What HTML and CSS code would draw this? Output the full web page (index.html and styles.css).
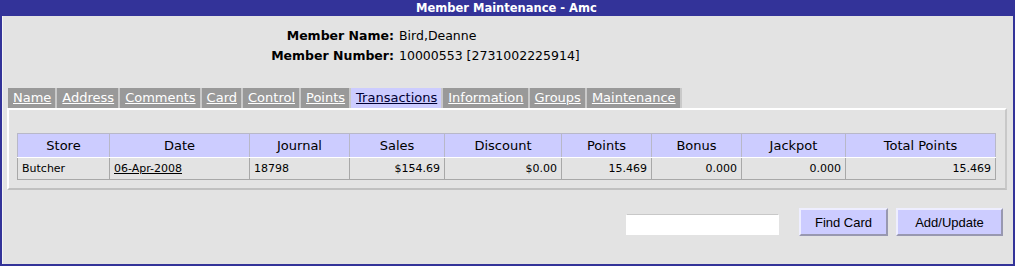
FILE: index.html
```html
<!DOCTYPE html>
<html>
<head>
<meta charset="utf-8">
<title>Member Maintenance - Amc</title>
<link rel="stylesheet" href="styles.css">
</head>
<body>
<div class="window">
  <div class="titlebar">Member Maintenance - Amc</div>
  <div class="content">
    <div class="member-info">
      <div class="label">Member Name:</div><div class="value">Bird,Deanne</div>
      <div class="label">Member Number:</div><div class="value">10000553 [2731002225914]</div>
    </div>
    <div class="tabs">
      <a class="tab" href="#">Name</a>
      <a class="tab" href="#">Address</a>
      <a class="tab" href="#">Comments</a>
      <a class="tab" href="#">Card</a>
      <a class="tab" href="#">Control</a>
      <a class="tab" href="#">Points</a>
      <a class="tab active" href="#">Transactions</a>
      <a class="tab" href="#">Information</a>
      <a class="tab" href="#">Groups</a>
      <a class="tab" href="#">Maintenance</a>
    </div>
    <div class="panel">
      <table class="grid">
        <colgroup>
          <col class="c-store"><col class="c-date"><col class="c-journal"><col class="c-sales"><col class="c-discount"><col class="c-points"><col class="c-bonus"><col class="c-jackpot"><col class="c-total">
        </colgroup>
        <thead>
          <tr><th>Store</th><th>Date</th><th>Journal</th><th>Sales</th><th>Discount</th><th>Points</th><th>Bonus</th><th>Jackpot</th><th>Total Points</th></tr>
        </thead>
        <tbody>
          <tr><td>Butcher</td><td><a href="#">06-Apr-2008</a></td><td>18798</td><td class="num">$154.69</td><td class="num">$0.00</td><td class="num">15.469</td><td class="num">0.000</td><td class="num">0.000</td><td class="num">15.469</td></tr>
        </tbody>
      </table>
    </div>
    <div class="actions">
      <input class="search" type="text">
      <button class="btn find">Find Card</button>
      <button class="btn add">Add/Update</button>
    </div>
  </div>
</div>
</body>
</html>
```

FILE: styles.css
```css
html, body {
  margin: 0;
  padding: 0;
  background: #e3e3e3;
}
body {
  font-family: "DejaVu Sans", Verdana, sans-serif;
  font-size: 12px;
  color: #000;
}
.window {
  width: 1015px;
  height: 266px;
  box-sizing: border-box;
  display: flex;
  flex-direction: column;
  border: 2px solid #333399;
  border-top: 0;
  background: #e3e3e3;
}
.titlebar {
  height: 16px;
  margin: 0 -2px;
  background: #333399;
  color: #fff;
  font-weight: bold;
  font-size: 11.5px;
  line-height: 16px;
  text-align: left;
  padding-left: 416px;
  white-space: nowrap;
}
.content {
  flex: 1;
  display: flex;
  flex-direction: column;
  border-left: 1px solid #f4f4f4;
}
.member-info {
  display: grid;
  grid-template-columns: 390px auto;
  column-gap: 5px;
  margin-top: 10px;
  margin-left: 1px;
  font-size: 12.5px;
  white-space: nowrap;
}
.member-info .label,
.member-info .value {
  height: 20px;
  line-height: 20px;
}
.member-info .label {
  font-weight: bold;
  text-align: right;
}
.tabs {
  display: flex;
  margin: 22px 0 0 5px;
}
.tab {
  height: 20px;
  line-height: 20px;
  padding: 0 4px 0 5px;
  font-size: 13px;
  background: #999999;
  color: #fff;
  border-right: 2px solid #c9c9c9;
  white-space: nowrap;
}
.tab.active {
  background: #ccccff;
  color: #000033;
}
.panel {
  margin: 0 6px 0 4px;
  border: 2px solid;
  border-color: #ffffff #c8c8c8 #c0c0c0 #ffffff;
  padding: 23px 9px 8px 8px;
}
.grid {
  border-collapse: collapse;
  table-layout: fixed;
  width: 979px;
}
.c-store { width: 92px; }
.c-date { width: 140px; }
.c-journal { width: 100px; }
.c-sales { width: 95px; }
.c-discount { width: 117px; }
.c-points { width: 90px; }
.c-bonus { width: 90px; }
.c-jackpot { width: 104px; }
.c-total { width: 150px; }
.grid th {
  background: #ccccff;
  font-weight: normal;
  font-size: 13px;
  height: 23px;
  padding: 0;
  border: 1px solid #b8b8c8;
  border-bottom-color: #ffffff;
}
.grid td {
  height: 21px;
  padding: 0 4px;
  font-size: 11px;
  border: 1px solid #a8a8a8;
  border-top-color: #ffffff;
}
.grid td a {
  color: #000;
}
.grid td.num {
  text-align: right;
}
.actions {
  display: flex;
  align-items: center;
  justify-content: flex-end;
  margin: 18px 10px 0 0;
}
.search {
  width: 153px;
  height: 21px;
  box-sizing: border-box;
  border: 1px solid #fff;
  border-top-color: #c8c8c8;
  background: #fff;
  margin: 5px 20px 0 0;
  padding: 0;
}
.btn {
  height: 28px;
  box-sizing: border-box;
  background: #ccccff;
  border: 2px solid;
  border-color: #eeeeff #9898b0 #9898b0 #eeeeff;
  font-family: "Liberation Sans", Arial, sans-serif;
  font-size: 13px;
  color: #000;
  padding: 0;
}
.find { width: 89px; margin-right: 8px; }
.add { width: 107px; }
```
